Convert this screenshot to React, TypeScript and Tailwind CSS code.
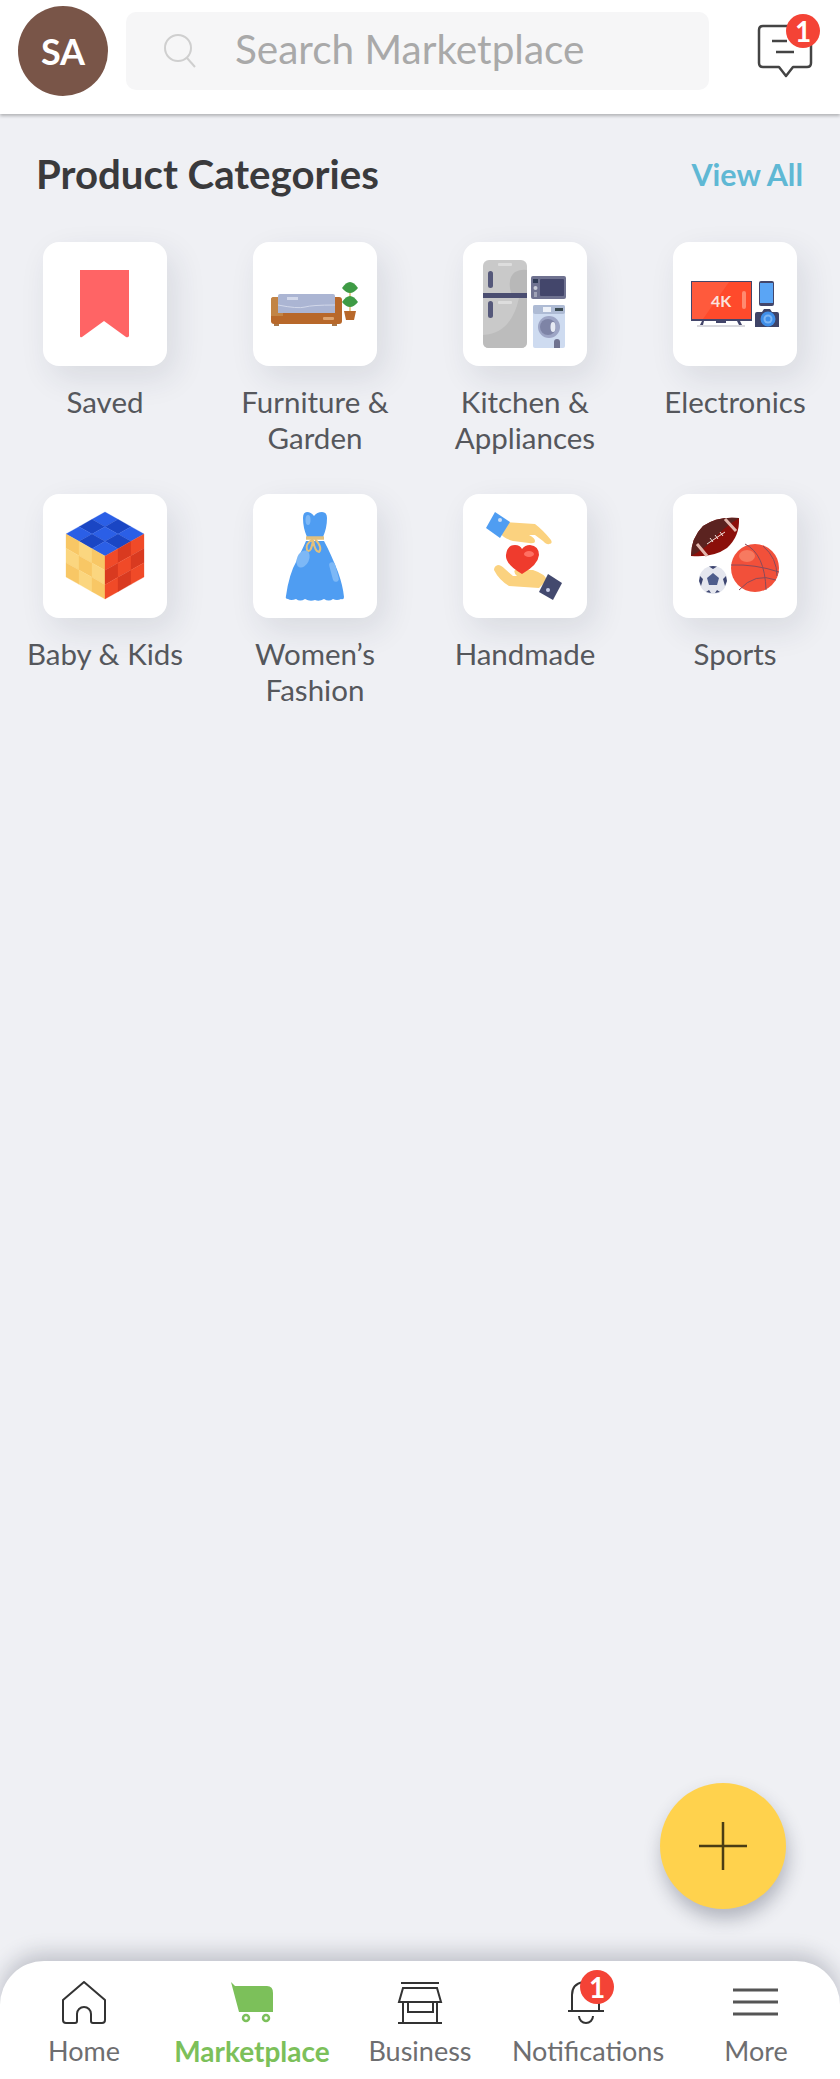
const Badge = ({ className }: { className: string }) => (
  <span className={`absolute flex h-[34px] w-[34px] items-center justify-center rounded-full bg-[#F44336] text-[28px] leading-none font-bold text-white ${className}`}>
    1
  </span>
);

const cell = (o: number[], u: number[], v: number[], i: number, j: number) => {
  const p = (a: number, b: number) => `${o[0] + (u[0] * a + v[0] * b) / 3},${o[1] + (u[1] * a + v[1] * b) / 3}`;
  return [p(i, j), p(i + 1, j), p(i + 1, j + 1), p(i, j + 1)].join(' ');
};

const Faces = ({ o, u, v, colors }: { o: number[]; u: number[]; v: number[]; colors: string[] }) => (
  <>
    {[0, 1, 2].flatMap((i) =>
      [0, 1, 2].map((j) => <polygon key={`${i}${j}`} points={cell(o, u, v, i, j)} fill={colors[(i + j) % 2]} stroke={colors[(i + j) % 2]} strokeWidth="0.3" />)
    )}
  </>
);

const Saved = () => (
  <path d="M37 28H86V94Q85 96 83 95L61 79L39 95Q37 96 37 94Z" fill="#FF6465" />
);

const Furniture = () => (
  <>
    <rect x="21" y="82" width="5" height="2" fill="#A9784A" />
    <rect x="79" y="82" width="5" height="2" fill="#A9784A" />
    <rect x="18" y="55" width="71" height="27" rx="3" fill="#B8682A" />
    <path d="M18 58Q18 55 21 55H30V74H18Z" fill="#C28445" />
    <path d="M25 54Q25 52 27 52H80Q82 52 82 54V71H25Z" fill="#ABB5D3" />
    <path d="M25 63Q45 67 52 65T82 63" stroke="#D2D8EA" strokeWidth="1" fill="none" />
    <rect x="34" y="55" width="11" height="3" fill="#D2D8EA" />
    <rect x="70" y="75" width="11" height="3" rx="1" fill="#DDA36E" />
    <rect x="96.500" y="44" width="1" height="26" fill="#C9A227" />
    <path d="M97 40Q101 40 105 46Q101 51 97 51Q93 51 89 46Q93 40 97 40Z" fill="#3E9B45" />
    <path d="M97 54Q101 54 105 60Q101 65 97 65Q93 65 89 60Q93 54 97 54Z" fill="#3E9B45" />
    <path d="M91 69H103L101 78H93Z" fill="#B8682A" />
  </>
);

const Kitchen = () => (
  <>
    <rect x="20" y="18" width="44" height="88" rx="6" fill="#C9C9C9" />
    <path d="M64 28V51H48Q44 36 52 30Q58 27 64 28Z" fill="#B8B8B8" />
    <path d="M20 93Q48 92 56 56H64V100Q64 106 58 106H26Q20 106 20 100Z" fill="#BCBCBC" />
    <rect x="20" y="51" width="44" height="5" fill="#4A4D70" />
    <rect x="25" y="29" width="5" height="17" rx="2.500" fill="#55587A" />
    <rect x="25" y="59" width="5" height="17" rx="2.500" fill="#55587A" />
    <rect x="35" y="21" width="14" height="3" rx="1" fill="#DDDDDD" />
    <rect x="35" y="59" width="14" height="3" rx="1" fill="#DDDDDD" />
    <rect x="68" y="34" width="35" height="23" rx="2" fill="#6F7290" />
    <rect x="77" y="37" width="24" height="17" rx="1" fill="#43466B" />
    <rect x="70" y="37" width="5" height="4" fill="#2F3A55" />
    <circle cx="72.500" cy="46" r="2" fill="#C9CCD8" />
    <rect x="71" y="50" width="3" height="5" fill="#9EA1B5" />
    <rect x="70" y="63" width="32" height="43" rx="2" fill="#CEDBF0" />
    <rect x="70" y="63" width="32" height="9" rx="2" fill="#AEBBD4" />
    <rect x="80" y="65" width="8" height="5" fill="#EDF1F8" />
    <rect x="92" y="66" width="8" height="3" fill="#3A4A50" />
    <circle cx="86" cy="85" r="11" fill="#9DA5C5" />
    <circle cx="85" cy="85" r="8" fill="#7E84A6" />
    <ellipse cx="90" cy="85" rx="2.500" ry="5" fill="#E6EAF4" />
    <path d="M91 106V100Q91 97 94 97T97 100V106Z" fill="#6F7290" />
  </>
);

const Electronics = () => (
  <>
    <rect x="24" y="83" width="48" height="2" fill="#D9D9DE" />
    <path d="M29 79L27 83H30L31 79ZM64 79L66 83H69L67 79ZM43 79H53V81H43Z" fill="#43466B" />
    <rect x="18" y="39" width="61" height="40" fill="#43466B" />
    <rect x="19" y="40" width="59" height="37" fill="#FF5A3C" />
    <path d="M56 40H78V77H30Z" fill="#FF4A2B" />
    <rect x="69" y="49" width="4" height="18" rx="2" fill="#FF8A70" />
    <text x="48" y="65" textAnchor="middle" fontSize="16" fontWeight="700" fill="#FBE3DD">4K</text>
    <rect x="86" y="39" width="15" height="25" rx="2" fill="#43466B" />
    <rect x="87" y="41" width="13" height="20" fill="#5AA5F5" />
    <path d="M89 70L91 67H97L99 70H104Q106 70 106 72V85H82V72Q82 70 84 70Z" fill="#3F4468" />
    <circle cx="95" cy="77" r="7.500" fill="#3F8EE8" />
    <circle cx="95" cy="77" r="4.500" fill="#7DB5F3" />
    <circle cx="95" cy="77" r="2.500" fill="#3F8EE8" />
  </>
);

const Kids = () => (
  <>
    <Faces o={[62, 18]} u={[39, 22]} v={[-39, 22]} colors={['#2B5FE6', '#1A46C4']} />
    <Faces o={[23, 40]} u={[39, 22]} v={[0, 43]} colors={['#F8C765', '#FBD67F']} />
    <Faces o={[62, 62]} u={[39, -22]} v={[0, 43]} colors={['#F04A28', '#D93A20']} />
  </>
);

const Dress = () => (
  <>
    <path d="M50 24Q50 18 54 18T61 22Q64 18 69 18T74 24Q74 34 70 43H54Q50 34 50 24Z" fill="#4F9DF2" />
    <path d="M53 47H71Q78 60 85 78Q90 92 91 103Q91 106 88 105Q84 107 80 105Q76 108 71 105Q66 108 62 106Q57 108 52 105Q47 108 43 105Q38 107 35 105Q32 105 33 102Q36 80 44 66Q50 54 53 47Z" fill="#4F9DF2" />
    <path d="M53 44H71" stroke="#E2C07C" strokeWidth="3.500" />
    <path d="M60 45Q52 50 54 56Q58 60 60 46Q62 58 66 58Q70 54 62 45" stroke="#E2C07C" strokeWidth="2" fill="none" />
    <ellipse cx="50" cy="65" rx="6" ry="9" transform="rotate(25 50 65)" fill="#7DB8F6" />
    <rect x="78" y="68" width="6" height="20" rx="3" transform="rotate(-15 81 78)" fill="#7DB8F6" />
    <ellipse cx="55" cy="26" rx="2.500" ry="5" fill="#7DB8F6" />
  </>
);

const Handmade = () => (
  <>
    <path d="M42 28L72 30Q80 36 88 46Q90 50 86 50Q84 51 80 47L72 41H66Q72 44 72 47Q72 50 66 49L50 47Q40 44 36 38Z" fill="#FBD27F" />
    <path d="M76 94L46 92Q36 86 31 76Q31 72 35 71Q38 71 42 75L50 82H54Q50 78 52 76H70Q82 80 84 86Z" fill="#FBD27F" />
    <polygon points="32,18 47,28 37,44 23,34" fill="#4F9DF2" />
    <circle cx="37" cy="26" r="2" fill="#C9DEF8" />
    <polygon points="85,80 99,89 90,106 76,98" fill="#43496E" />
    <circle cx="85" cy="96" r="2" fill="#C9CEE8" />
    <path d="M59 80Q42 70 43 61Q44 51 52 51Q57 51 59 55Q62 51 67 51Q76 52 76 61Q75 71 59 80Z" fill="#EF3B2D" />
    <ellipse cx="66" cy="60" rx="5" ry="3" fill="#FF7063" />
  </>
);

const Sports = () => (
  <>
    <path d="M18 62Q18 44 30 32Q44 22 66 24Q67 42 54 54Q40 64 18 62Z" fill="#8B0F0A" />
    <path d="M18 62Q18 44 30 32Q44 22 66 24Q50 34 40 46Q30 56 18 62Z" fill="#5B2320" />
    <path d="M24 50L34 62M52 25L63 37" stroke="#E3B8AE" strokeWidth="3" />
    <path d="M34 50L52 38M37 44L40 48M42 41L45 45M47 38L50 42" stroke="#F2E3DD" strokeWidth="1" />
    <circle cx="82" cy="74" r="24" fill="#F2503A" />
    <path d="M58 71Q82 70 106 78M66 96Q82 78 103 86M72 50Q92 60 93 96M90 52Q104 64 104 82" stroke="#8A4A5A" strokeWidth="1" fill="none" />
    <ellipse cx="74" cy="62" rx="8" ry="6" fill="#F77A60" />
    <circle cx="40" cy="86" r="14" fill="#E4E6EE" />
    <polygon points="40,79 46,84 44,91 36,91 34,84" fill="#4E5D8C" />
    <path d="M36 72.500L40 75L44 72.500L40 72ZM27 82L30 85L28 92L26 87ZM53 82L50 85L52 92L54 87ZM33 98L38 99L36 96ZM47 98L42 99L44 96Z" fill="#3C4570" />
  </>
);

const categories = [
  { label: 'Saved', art: <Saved /> },
  { label: 'Furniture & Garden', art: <Furniture /> },
  { label: 'Kitchen & Appliances', art: <Kitchen /> },
  { label: 'Electronics', art: <Electronics /> },
  { label: 'Baby & Kids', art: <Kids /> },
  { label: 'Women’s Fashion', art: <Dress /> },
  { label: 'Handmade', art: <Handmade /> },
  { label: 'Sports', art: <Sports /> },
];

const navItems = [
  {
    label: 'Home',
    icon: (
      <path d="M3 19L24 1L45 19V39Q45 42 42 42H33Q31 42 31 40V33A7 7 0 0 0 17 33V40Q17 42 15 42H6Q3 42 3 39Z" fill="none" stroke="#333" strokeWidth="2" strokeLinejoin="round" />
    ),
  },
  {
    label: 'Marketplace',
    active: true,
    icon: (
      <>
        <path d="M3 1L7 5H39Q45 5 45 12V31H11Z" fill="#7CC05A" />
        <circle cx="18" cy="37" r="3" fill="none" stroke="#7CC05A" strokeWidth="2.500" />
        <circle cx="38" cy="37" r="3" fill="none" stroke="#7CC05A" strokeWidth="2.500" />
      </>
    ),
  },
  {
    label: 'Business',
    icon: (
      <path d="M5 2H43M7 7H41L45 21H3ZM7 21V42M41 21V42M2 42H46M12 21V31H37V21" fill="none" stroke="#333" strokeWidth="2" />
    ),
  },
  {
    label: 'Notifications',
    badge: true,
    icon: (
      <>
        <path d="M8 30V14Q8 3 19 1H24Q35 3 35 14V30M4 30H40" fill="none" stroke="#333" strokeWidth="2" />
        <path d="M15 35A7 7 0 0 0 29 35" fill="none" stroke="#333" strokeWidth="2" />
      </>
    ),
  },
  {
    label: 'More',
    icon: <path d="M1 9H46M1 21H46M1 33H46" fill="none" stroke="#555" strokeWidth="3" />,
  },
];

export default function App() {
  return (
    <div className="relative flex h-[2079px] w-[840px] flex-col overflow-hidden bg-[#EFF0F4] font-['Lato',sans-serif]">
      <header className="relative z-10 flex h-[114px] items-center gap-[18px] bg-white pr-[24px] pb-[12px] pl-[18px] shadow-[0_2px_3px_rgba(0,0,0,0.25)]">
        <div className="flex h-[90px] w-[90px] shrink-0 items-center justify-center rounded-full bg-[#795548] text-[36px] font-bold text-white">
          SA
        </div>
        <div className="flex h-[78px] w-[583px] items-center gap-[40px] rounded-[10px] bg-[#F6F6F7] pl-[38px]">
          <svg width="32" height="34" viewBox="0 0 32 34" fill="none" stroke="#CFCFCF" strokeWidth="2">
            <circle cx="14" cy="14" r="13" />
            <path d="M23 24L31 33" />
          </svg>
          <span className="-mt-[3px] -ml-[1px] text-[40.5px] text-[#A9A9A9]">Search Marketplace</span>
        </div>
        <div className="relative ml-auto -mt-[6px] h-[56px] w-[60px]">
          <svg width="60" height="58" viewBox="0 0 60 58" fill="none" stroke="#444" strokeWidth="2.500" strokeLinejoin="round">
            <path d="M7 6Q3 6 3 10V43Q3 47 7 47H23L30 56L37 47H51Q55 47 55 43V10" />
            <path d="M7 6H40M16 21H31M20 32H38" />
          </svg>
          <Badge className="top-[-6px] right-[-4px]" />
        </div>
      </header>

      <main className="flex-1">
        <div className="mt-[36px] flex h-[48px] items-center justify-between pr-[37px] pl-[36px]">
          <h1 className="text-[40.2px] font-bold text-[#3A3A3C]">Product Categories</h1>
          <a className="mt-[1px] text-[30.500px] font-bold text-[#5FB8D4]">View All</a>
        </div>
        <div className="mt-[44px] grid grid-cols-4 gap-y-[36px]">
          {categories.map((c) => (
            <div key={c.label} className="flex flex-col items-center">
              <div className="h-[124px] w-[124px] rounded-[16px] bg-white shadow-[8px_12px_32px_rgba(40,45,70,0.11)]">
                <svg width="124" height="124" viewBox="0 0 124 124">
                  {c.art}
                </svg>
              </div>
              <p className="mt-[18px] mb-[2px] h-[72px] w-[180px] text-center text-[29.500px] leading-[36px] text-[#55575C]">{c.label}</p>
            </div>
          ))}
        </div>
      </main>

      <button className="absolute top-[1783px] left-[660px] flex h-[126px] w-[126px] items-center justify-center rounded-full bg-[#FFD24D] shadow-[2px_10px_18px_rgba(40,45,70,0.3)]">
        <svg width="48" height="48" viewBox="0 0 48 48" stroke="#4A3D14" strokeWidth="2.500">
          <path d="M24 0V48M0 24H48" />
        </svg>
      </button>

      <nav className="grid h-[118px] grid-cols-5 rounded-t-[44px] bg-white pt-[20px] shadow-[0_-8px_20px_rgba(30,35,60,0.22)]">
        {navItems.map((item) => (
          <div key={item.label} className="flex flex-col items-center">
            <div className="relative h-[44px] w-[48px]">
              <svg width="48" height="44" viewBox="0 0 48 44">
                {item.icon}
              </svg>
              {item.badge && <Badge className="top-[-11px] right-[-2px]" />}
            </div>
            <span className={`mt-[9px] leading-[34px] whitespace-nowrap ${item.active ? 'text-[28px] font-bold text-[#7CC05A]' : 'text-[27px] text-[#6E6E70]'}`}>
              {item.label}
            </span>
          </div>
        ))}
      </nav>
    </div>
  );
}
